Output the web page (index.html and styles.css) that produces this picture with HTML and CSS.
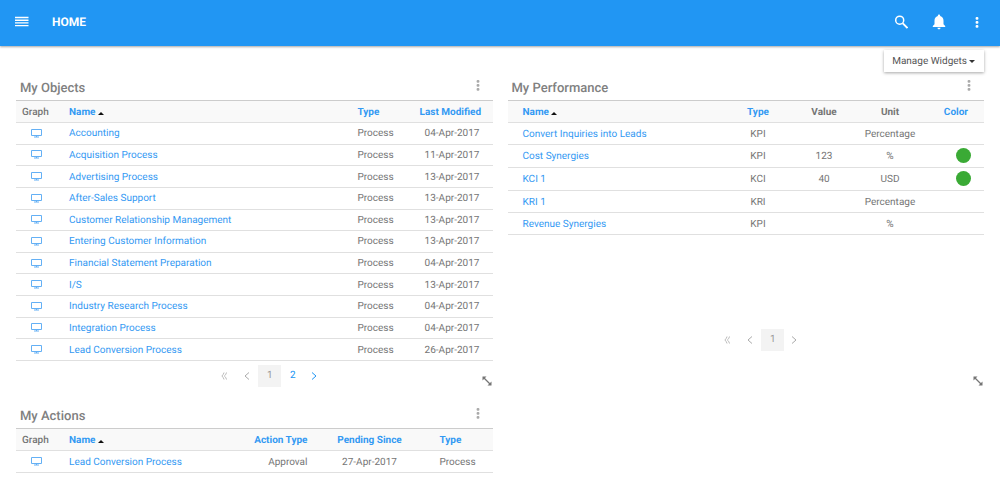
FILE: index.html
```html
<!DOCTYPE html>
<html lang="en">
<head>
<meta charset="utf-8">
<meta name="viewport" content="width=device-width, initial-scale=1">
<title>Home</title>
<link rel="stylesheet" href="styles.css">
</head>
<body>
<svg class="sprite" aria-hidden="true">
  <symbol id="monitor" viewBox="0 0 11 9"><path d="M.5 .5h10v6h-10zM3 8h5M5.500 6.500v1.500" fill="none" stroke="currentColor"/></symbol>
  <symbol id="dots" viewBox="0 0 4 12"><rect x=".6" y="1" width="2.800" height="2.800" rx="1"/><rect x=".6" y="5" width="2.800" height="2.800" rx="1"/><rect x=".6" y="9" width="2.800" height="2.800" rx="1"/></symbol>
  <symbol id="resize" viewBox="0 0 10 10"><path d="M.5 .5h4L.5 4.500zM9.500 9.500h-4l4-4z" fill="currentColor"/><path d="M2 2l6 6" stroke="currentColor" stroke-width="1.300"/></symbol>
  <symbol id="prev" viewBox="0 0 6 8"><path d="M5 .5L1 4l4 3.500" fill="none" stroke="currentColor"/></symbol>
  <symbol id="next" viewBox="0 0 6 8"><path d="M1 .5L5 4 1 7.500" fill="none" stroke="currentColor"/></symbol>
  <symbol id="first" viewBox="0 0 6 8"><path d="M3 .5Q2.500 3 .8 4 2.500 5 3 7.500M5.500 .5Q5 3 3.300 4 5 5 5.500 7.500" fill="none" stroke="currentColor" stroke-width=".8"/></symbol>
</svg>
<header class="topbar">
  <button class="icon-btn" aria-label="Menu"><svg width="14" height="12" viewBox="0 0 14 12"><path d="M0 1.500h13.500M0 4.200h13.500M0 6.900h13.500M0 9.600h13.500" stroke="currentColor" stroke-width="1.400"/></svg></button>
  <h1 class="page-title">HOME</h1>
  <div class="actions">
    <button class="icon-btn" aria-label="Search"><svg width="14" height="14" viewBox="0 0 14 14" fill="none" stroke="currentColor"><circle cx="5.700" cy="5.200" r="4" stroke-width="1.500"/><path d="M8.800 8.300l4.700 4.700" stroke-width="1.900"/></svg></button>
    <button class="icon-btn" aria-label="Notifications"><svg width="14" height="16" viewBox="0 0 14 16" fill="currentColor"><path d="M7 .5c.8 0 1.200.6 1.200 1.500C10.400 2.600 11.500 4.300 11.500 6.700v3.600l1.700 1.700v1H.8v-1l1.700-1.700V6.700C2.500 4.300 3.600 2.600 5.800 2 5.800 1.100 6.200.5 7 .5zM5.500 13.700h3c0 2-3 2-3 0z"/></svg></button>
    <button class="icon-btn" aria-label="More options"><svg width="4" height="12" fill="currentColor"><use href="#dots"/></svg></button>
  </div>
</header>
<main class="page">
  <div class="toolbar"><button class="manage">Manage Widgets <span class="caret"></span></button></div>
  <div class="widgets">
    <section class="widget">
      <div class="widget-head"><h2 class="widget-title">My Objects</h2><button class="more" aria-label="My Objects options"><svg width="4" height="12"><use href="#dots"/></svg></button></div>
      <table class="grid objects">
        <thead><tr><th class="graph">Graph</th><th class="name"><a href="#">Name <span class="sort"></span></a></th><th class="type"><a href="#">Type</a></th><th class="modified"><a href="#">Last Modified</a></th></tr></thead>
        <tbody>
          <tr><td class="graph"><svg class="monitor"><use href="#monitor"/></svg></td><td><a href="#">Accounting</a></td><td>Process</td><td class="modified">04-Apr-2017</td></tr>
          <tr><td class="graph"><svg class="monitor"><use href="#monitor"/></svg></td><td><a href="#">Acquisition Process</a></td><td>Process</td><td class="modified">11-Apr-2017</td></tr>
          <tr><td class="graph"><svg class="monitor"><use href="#monitor"/></svg></td><td><a href="#">Advertising Process</a></td><td>Process</td><td class="modified">13-Apr-2017</td></tr>
          <tr><td class="graph"><svg class="monitor"><use href="#monitor"/></svg></td><td><a href="#">After-Sales Support</a></td><td>Process</td><td class="modified">13-Apr-2017</td></tr>
          <tr><td class="graph"><svg class="monitor"><use href="#monitor"/></svg></td><td><a href="#">Customer Relationship Management</a></td><td>Process</td><td class="modified">13-Apr-2017</td></tr>
          <tr><td class="graph"><svg class="monitor"><use href="#monitor"/></svg></td><td><a href="#">Entering Customer Information</a></td><td>Process</td><td class="modified">13-Apr-2017</td></tr>
          <tr><td class="graph"><svg class="monitor"><use href="#monitor"/></svg></td><td><a href="#">Financial Statement Preparation</a></td><td>Process</td><td class="modified">04-Apr-2017</td></tr>
          <tr><td class="graph"><svg class="monitor"><use href="#monitor"/></svg></td><td><a href="#">I/S</a></td><td>Process</td><td class="modified">13-Apr-2017</td></tr>
          <tr><td class="graph"><svg class="monitor"><use href="#monitor"/></svg></td><td><a href="#">Industry Research Process</a></td><td>Process</td><td class="modified">04-Apr-2017</td></tr>
          <tr><td class="graph"><svg class="monitor"><use href="#monitor"/></svg></td><td><a href="#">Integration Process</a></td><td>Process</td><td class="modified">04-Apr-2017</td></tr>
          <tr><td class="graph"><svg class="monitor"><use href="#monitor"/></svg></td><td><a href="#">Lead Conversion Process</a></td><td>Process</td><td class="modified">26-Apr-2017</td></tr>
        </tbody>
      </table>
      <nav class="pager" aria-label="My Objects pages">
        <button disabled aria-label="First page"><svg width="6" height="8"><use href="#first"/></svg></button><button disabled aria-label="Previous page"><svg width="6" height="8"><use href="#prev"/></svg></button><button class="current" aria-current="page">1</button><button>2</button><button class="step" aria-label="Next page"><svg width="6" height="8"><use href="#next"/></svg></button>
      </nav>
      <svg class="resize"><use href="#resize"/></svg>
    </section>
    <section class="widget">
      <div class="widget-head"><h2 class="widget-title">My Performance</h2><button class="more" aria-label="My Performance options"><svg width="4" height="12"><use href="#dots"/></svg></button></div>
      <table class="grid performance">
        <thead><tr><th class="name"><a href="#">Name <span class="sort"></span></a></th><th class="figure"><a href="#">Type</a></th><th class="figure">Value</th><th class="figure">Unit</th><th class="color"><a href="#">Color</a></th></tr></thead>
        <tbody>
          <tr><td class="name"><a href="#">Convert Inquiries into Leads</a></td><td class="figure">KPI</td><td class="figure"></td><td class="figure">Percentage</td><td class="color"></td></tr>
          <tr class="rated"><td class="name"><a href="#">Cost Synergies</a></td><td class="figure">KPI</td><td class="figure">123</td><td class="figure">%</td><td class="color"><span class="status"></span></td></tr>
          <tr class="rated"><td class="name"><a href="#">KCI 1</a></td><td class="figure">KCI</td><td class="figure">40</td><td class="figure">USD</td><td class="color"><span class="status"></span></td></tr>
          <tr><td class="name"><a href="#">KRI 1</a></td><td class="figure">KRI</td><td class="figure"></td><td class="figure">Percentage</td><td class="color"></td></tr>
          <tr><td class="name"><a href="#">Revenue Synergies</a></td><td class="figure">KPI</td><td class="figure"></td><td class="figure">%</td><td class="color"></td></tr>
        </tbody>
      </table>
      <nav class="pager raised" aria-label="My Performance pages">
        <button disabled aria-label="First page"><svg width="6" height="8"><use href="#first"/></svg></button><button disabled aria-label="Previous page"><svg width="6" height="8"><use href="#prev"/></svg></button><button class="current" aria-current="page">1</button><button class="step" disabled aria-label="Next page"><svg width="6" height="8"><use href="#next"/></svg></button>
      </nav>
      <svg class="resize"><use href="#resize"/></svg>
    </section>
    <section class="widget">
      <div class="widget-head"><h2 class="widget-title">My Actions</h2><button class="more" aria-label="My Actions options"><svg width="4" height="12"><use href="#dots"/></svg></button></div>
      <table class="grid tasks">
        <thead><tr><th class="graph">Graph</th><th class="name"><a href="#">Name <span class="sort"></span></a></th><th class="action"><a href="#">Action Type</a></th><th class="pending"><a href="#">Pending Since</a></th><th class="type"><a href="#">Type</a></th></tr></thead>
        <tbody><tr><td class="graph"><svg class="monitor"><use href="#monitor"/></svg></td><td><a href="#">Lead Conversion Process</a></td><td class="action">Approval</td><td class="pending">27-Apr-2017</td><td>Process</td></tr></tbody>
      </table>
    </section>
  </div>
</main>
</body>
</html>
```
FILE: styles.css
```css
* { box-sizing: border-box; }
body { margin: 0; background: #fff; color: #757575; font: 10px/14px Roboto, "Liberation Sans", sans-serif; text-rendering: geometricPrecision; }
button { margin: 0; padding: 0; border: 0; background: none; color: inherit; font: inherit; text-rendering: inherit; cursor: pointer; }
a { color: #3399f3; text-decoration: none; }
svg { display: block; }
.sprite { position: absolute; width: 0; height: 0; }

.topbar { display: flex; align-items: center; height: 46px; padding: 0 16px 2px 15px; background: #2196f3; color: #fff; box-shadow: 0 1px 2px rgba(0, 0, 0, .35); }
.icon-btn { display: flex; align-items: center; justify-content: center; width: 14px; height: 20px; }
.page-title { margin: 0 0 0 23px; font-size: 12px; line-height: 16px; font-weight: 700; }
.actions { display: flex; gap: 24px; margin-left: auto; }

.page { padding: 0 16px 8px; }
.toolbar { display: flex; justify-content: flex-end; padding: 4px 0 2px; }
.manage { display: flex; align-items: center; gap: 2px; height: 22px; padding: 2px 9px 0 8px; background: #fff; color: #555; box-shadow: 0 1px 3px rgba(0, 0, 0, .35); }
.caret { margin-bottom: 2px; border: 3px solid transparent; border-top-color: #333; border-bottom: 0; }

.widgets { display: grid; grid-template-columns: 1fr 1fr; gap: 15px; }
.widget { position: relative; display: flex; flex-direction: column; min-width: 0; }
.widget-head { display: flex; align-items: center; justify-content: space-between; height: 26px; padding: 0 13px 0 4px; }
.widget-title { margin: 0; padding-top: 3px; font-size: 13px; line-height: 16px; font-weight: 500; color: #808080; }
.more { padding: 0 0 4px; color: #aaa; }
.more svg { fill: currentColor; }

.grid { width: 100%; table-layout: fixed; border-collapse: separate; border-spacing: 0; border-top: 1px solid #ccc; }
.grid th, .grid td { height: 22px; padding: 2px 0 0; border-bottom: 1px solid #e0e0e0; text-align: left; white-space: nowrap; }
.grid th { background: #f9f9f9; font-weight: 700; }
.grid th.graph { font-weight: 500; }
.objects { height: 261px; }
.objects tbody td { height: 21px; }
.grid .rated td { height: 23px; }
.grid .graph { width: 53px; padding-left: 6px; }
.grid td.graph { padding: 0 0 0 15px; }
.monitor { width: 11px; height: 9px; color: #64b0f5; }
.sort { display: inline-block; border: 3px solid transparent; border-bottom-color: #111; border-top: 0; }
.objects .type { width: 62px; }
.grid .modified { width: 73px; padding-right: 8px; text-align: center; }
.grid th.modified { padding-right: 12px; }
.performance .name { padding-left: 15px; }
.grid .figure { width: 66px; text-align: center; }
.grid .color { width: 61px; text-align: right; }
.grid th.color { padding-right: 16px; }
.grid td.color { padding: 0 13px 1px 0; }
.status { display: block; width: 15px; height: 15px; margin-left: auto; border-radius: 50%; background: #3aaa35; }
.grid .action { width: 92px; text-align: right; }
.grid .pending { width: 132px; padding-right: 8px; text-align: center; }
.tasks .type { width: 53px; }

.pager { display: flex; justify-content: center; margin-top: auto; padding: 4px 0 0 28px; }
.pager button { display: flex; align-items: center; justify-content: center; width: 23px; height: 22px; color: #2196f3; }
.pager button:disabled { color: #aaa; }
.pager .current { background: #f3f3f3; color: #999; }
.pager .step { width: 20px; }
.raised { margin-bottom: 36px; }
.resize { position: absolute; right: 1px; bottom: 1px; width: 10px; height: 10px; color: #757575; }
```
